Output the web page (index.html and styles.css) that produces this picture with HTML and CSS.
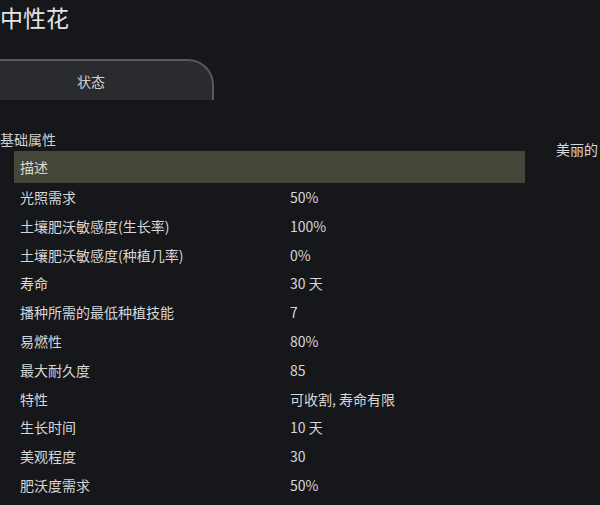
FILE: index.html
```html
<!DOCTYPE html>
<html lang="zh">
<head>
<meta charset="utf-8">
<link rel="stylesheet" href="styles.css">
</head>
<body>
<div class="page">
  <div class="title">中性花</div>
  <div class="tabbar">
    <div class="tab">状态</div>
  </div>
  <div class="content">
    <div class="stats">
      <div class="section">基础属性</div>
      <div class="row selected"><span class="label">描述</span><span class="value"></span></div>
      <div class="row"><span class="label">光照需求</span><span class="value">50%</span></div>
      <div class="row"><span class="label">土壤肥沃敏感度(生长率)</span><span class="value">100%</span></div>
      <div class="row"><span class="label">土壤肥沃敏感度(种植几率)</span><span class="value">0%</span></div>
      <div class="row"><span class="label">寿命</span><span class="value">30 天</span></div>
      <div class="row"><span class="label">播种所需的最低种植技能</span><span class="value">7</span></div>
      <div class="row"><span class="label">易燃性</span><span class="value">80%</span></div>
      <div class="row"><span class="label">最大耐久度</span><span class="value">85</span></div>
      <div class="row"><span class="label">特性</span><span class="value">可收割, 寿命有限</span></div>
      <div class="row"><span class="label">生长时间</span><span class="value">10 天</span></div>
      <div class="row"><span class="label">美观程度</span><span class="value">30</span></div>
      <div class="row"><span class="label">肥沃度需求</span><span class="value">50%</span></div>
    </div>
    <div class="desc">美丽的</div>
  </div>
</div>
</body>
</html>
```
FILE: styles.css
```css
html, body {
  margin: 0;
  padding: 0;
  background: #16171b;
  width: 600px;
  height: 505px;
  overflow: hidden;
}
.page {
  font-family: "Noto Sans CJK SC", "Liberation Sans", sans-serif;
  color: #d6d6d6;
  width: 600px;
  height: 505px;
  overflow: hidden;
}
.title {
  font-size: 23px;
  line-height: 30px;
  height: 30px;
  margin-top: 2px;
  color: #e4e4e4;
}
.tabbar {
  margin-top: 27px;
  height: 41px;
  display: flex;
}
.tab {
  margin-left: -30px;
  width: 244px;
  height: 41px;
  box-sizing: border-box;
  background: #2a2b2f;
  border-top: 2px solid #58595d;
  border-right: 2px solid #58595d;
  border-top-right-radius: 26px;
  display: flex;
  align-items: center;
  justify-content: center;
  font-size: 14px;
  color: #d0d0d0;
}
.content {
  margin-top: 27px;
  display: flex;
  white-space: nowrap;
}
.stats {
  width: 525px;
  flex: none;
}
.section {
  height: 24px;
  line-height: 24px;
  font-size: 14px;
  color: #d0d0d0;
}
.row {
  display: flex;
  height: 28.8px;
  line-height: 28.8px;
  font-size: 14px;
  margin-left: 14px;
  padding-left: 6px;
}
.row.selected {
  height: 32px;
  line-height: 32px;
  background: #45463a;
  color: #dcdccd;
}
.label {
  width: 270px;
  flex: none;
}
.value {
  flex: 1;
}
.desc {
  margin-left: 31px;
  margin-top: 12px;
  font-size: 14px;
  line-height: 20px;
  color: #d8d8d8;
}
```
